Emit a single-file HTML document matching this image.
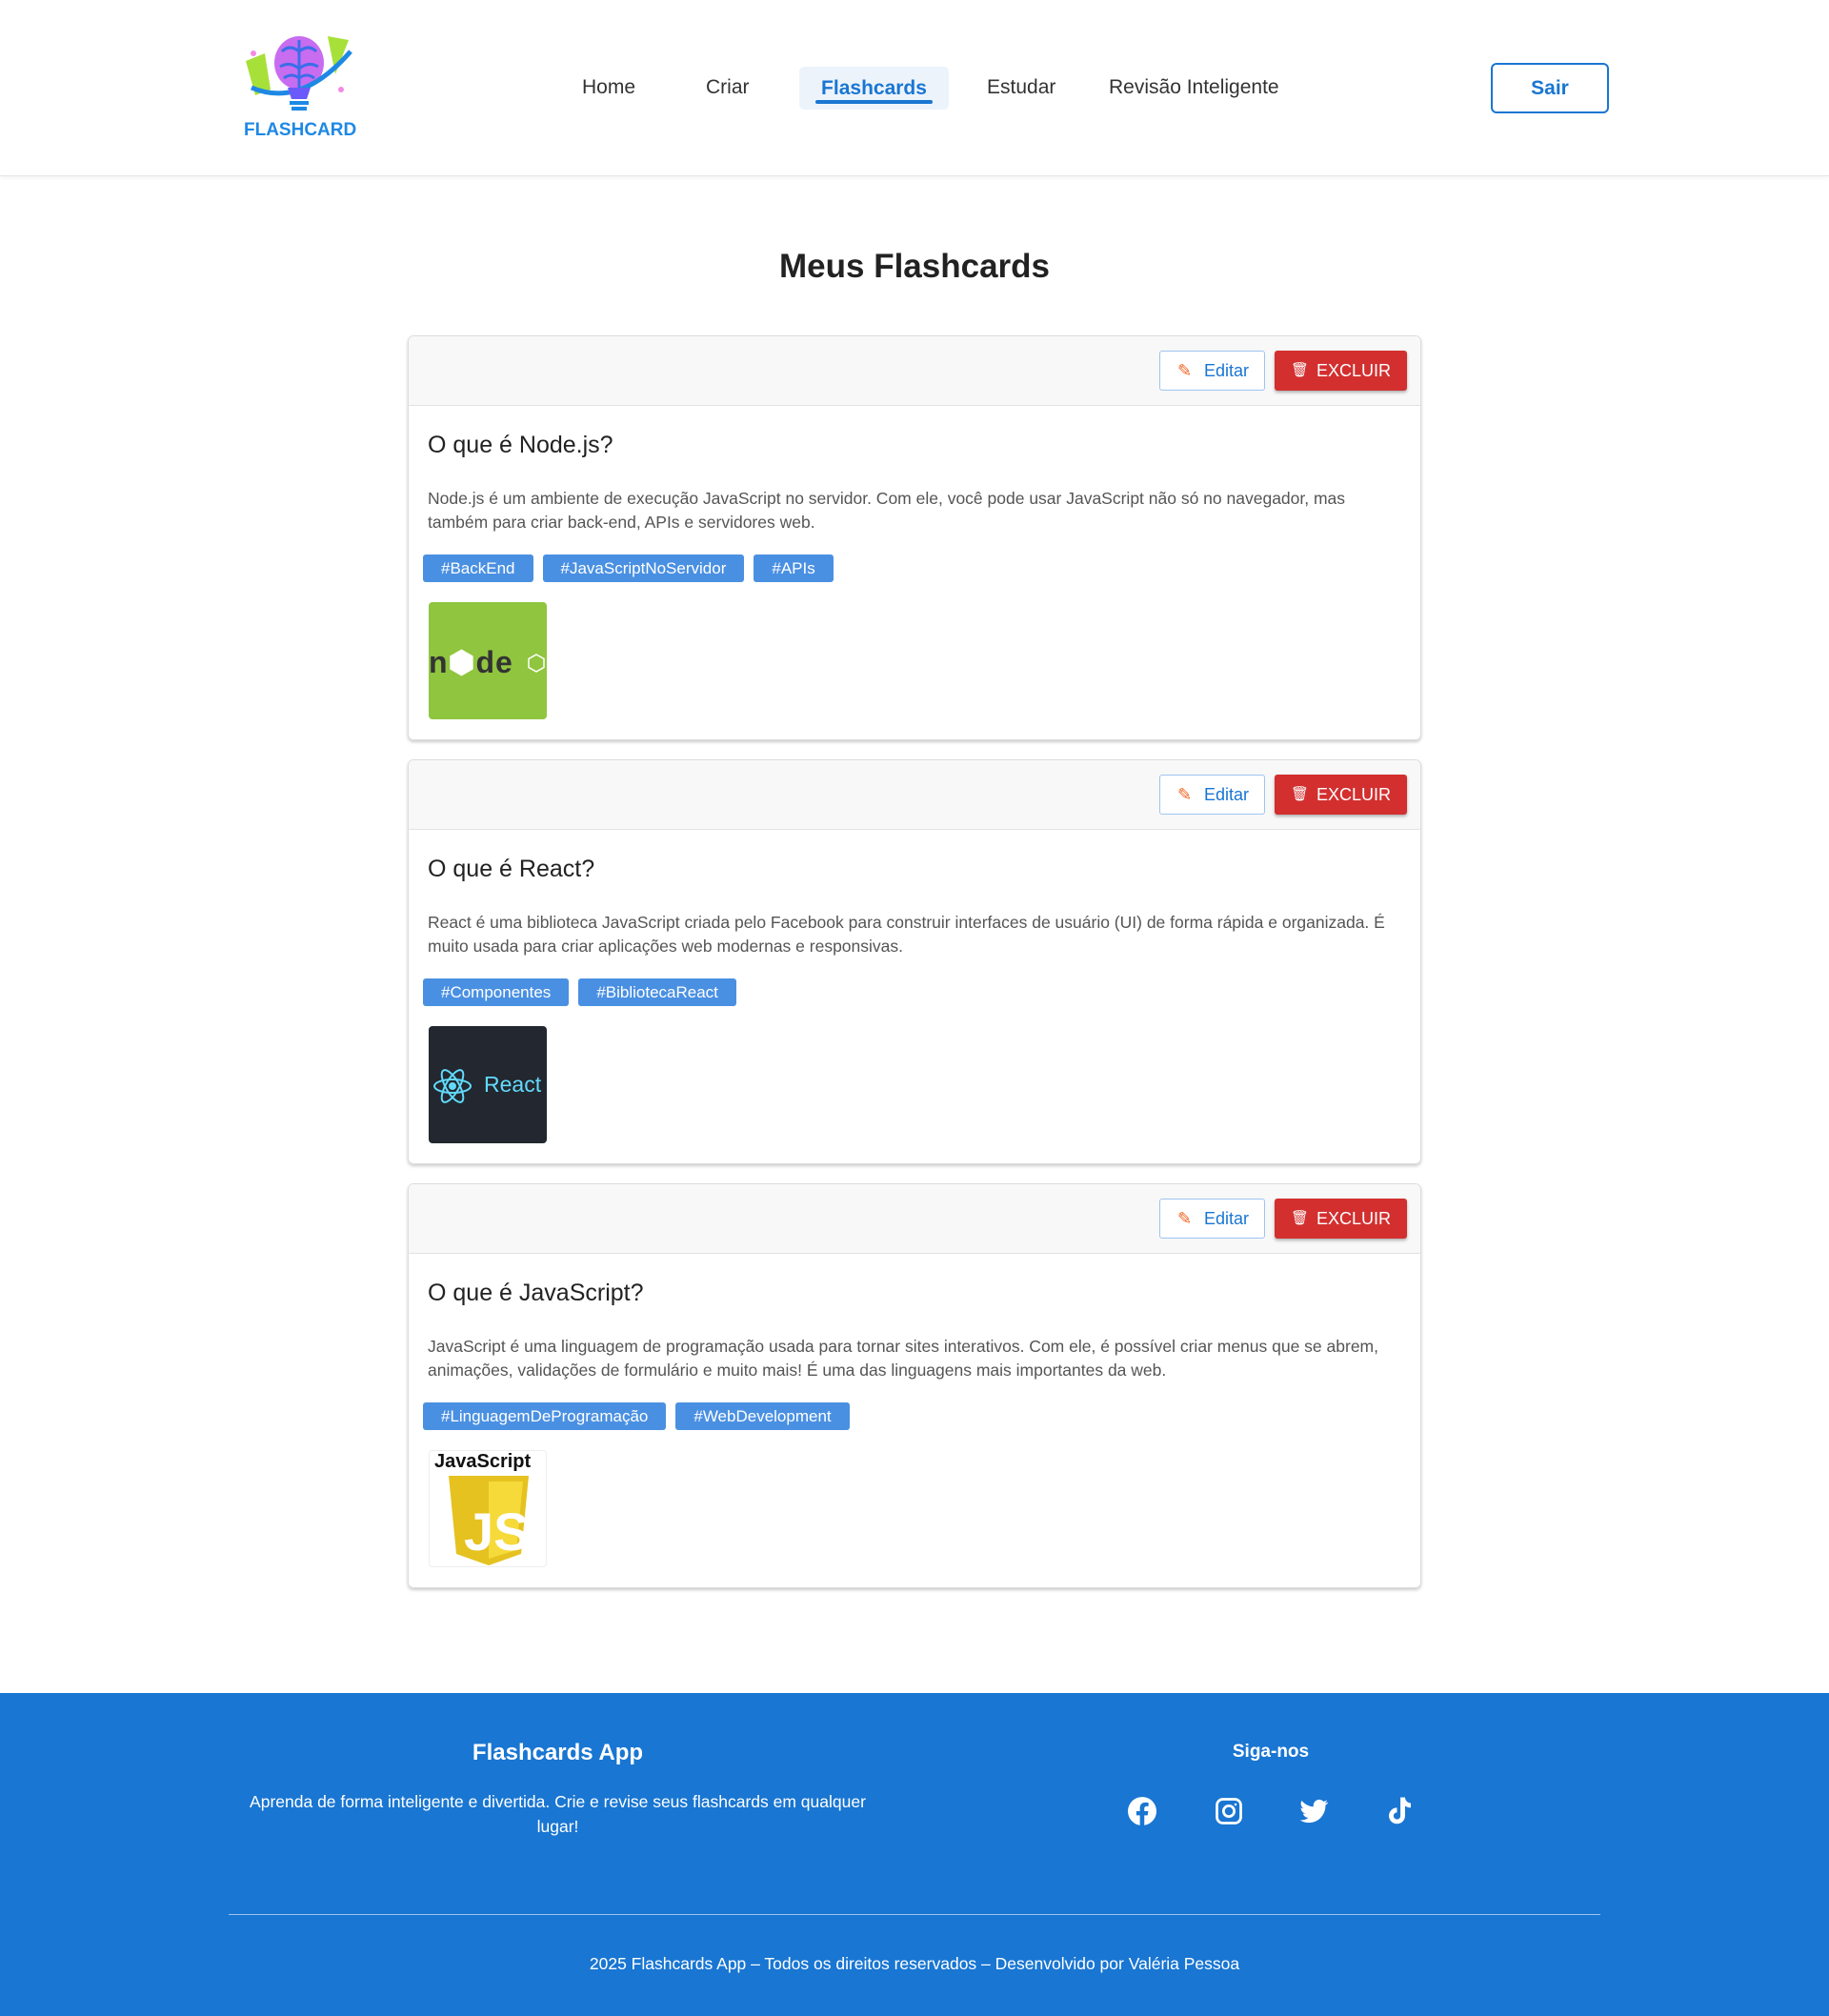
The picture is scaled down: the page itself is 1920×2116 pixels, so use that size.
<!DOCTYPE html>
<html><head><meta charset="utf-8"><style>
*{box-sizing:border-box;margin:0;padding:0}
body{width:1920px;height:2116px;font-family:"Liberation Sans",Arial,sans-serif;background:#fff;position:relative;overflow:hidden}
.hdr{position:absolute;left:0;top:0;width:1920px;height:185px;border-bottom:1px solid #e6e6e6;box-shadow:0 2px 4px rgba(0,0,0,.05)}
.nav{position:absolute;top:80px;font-size:21px;color:#333}
.act{position:absolute;left:839px;top:70px;width:157px;height:45px;background:#edf3fb;border-radius:5px;color:#1976d2;font-weight:bold;font-size:21px;text-align:center;padding-top:11px}
.act:after{content:"";position:absolute;left:17px;right:17px;bottom:6px;height:4px;background:#1976d2;border-radius:2px}
.sair{position:absolute;left:1565px;top:66px;width:124px;height:53px;border:2px solid #1976d2;border-radius:6px;color:#1976d2;font-weight:bold;font-size:21px;text-align:center;line-height:49px}
h1{position:absolute;top:260px;width:1920px;text-align:center;font-size:35px;color:#222}
.card{position:absolute;left:428px;width:1064px;height:425px;border:1px solid #ddd;border-radius:6px;box-shadow:0 2px 3px rgba(0,0,0,.2);overflow:hidden}
.ch{height:73px;background:#f8f8f8;border-bottom:1px solid #e3e3e3;position:relative}
.ed{position:absolute;left:788px;top:15px;width:111px;height:42px;border:1px solid #9fc4ef;border-radius:3px;background:#fff;color:#1976d2;font-size:18px;line-height:40px;padding-left:46px}
.ex{position:absolute;left:909px;top:15px;width:139px;height:42px;background:#d32f2f;border-radius:3px;color:#fff;font-size:18px;line-height:42px;padding-left:44px;box-shadow:0 2px 3px rgba(0,0,0,.3)}
.ct{position:absolute;left:20px;top:100px;font-size:25px;color:#222}
.cd{position:absolute;left:20px;top:158px;width:1030px;font-size:17.5px;line-height:24.5px;color:#555}
.tags{position:absolute;left:15px;top:229px}
.tag{display:inline-block;background:#4a90e2;color:#fff;font-size:17px;height:29px;line-height:29px;padding:0 19px;border-radius:3px;margin-right:10px}
.img{position:absolute;left:21px;top:279px;width:124px;height:123px;border-radius:4px;overflow:hidden}
.foot{position:absolute;left:0;top:1777px;width:1920px;height:339px;background:#1976d2;color:#fff}
</style></head><body>
<div class="hdr">
<svg style="position:absolute;left:256px;top:34px" width="122" height="90" viewBox="0 0 122 90">
<path d="M2 30 L22 22 L28 60 L12 66Z" fill="#a8e03a"/><path d="M88 4 L110 8 L96 44Z" fill="#a8e03a"/>
<circle cx="10" cy="22" r="3" fill="#f38be6"/><circle cx="102" cy="60" r="3" fill="#f38be6"/>
<ellipse cx="58" cy="32" rx="26" ry="28" fill="#c86cf0"/>
<path d="M40 20q8-8 18 0q10-8 18 0M38 36q10-6 20 2q10-8 20-2M42 48q8-6 16 0q8-6 16 0M58 8v50" stroke="#3b6ee8" stroke-width="3" fill="none"/>
<path d="M8 58 Q60 80 112 20" stroke="#1e88e5" stroke-width="5" fill="none"/>
<path d="M46 58h24l-4 12h-16z" fill="#6a5af9"/><rect x="48" y="72" width="20" height="4" fill="#1e88e5"/><rect x="50" y="78" width="16" height="4" fill="#1e88e5"/>
</svg>
<div style="position:absolute;left:256px;top:126px;font-size:19px;font-weight:bold;color:#1e88e5">FLASHCARD</div>
<div class="nav" style="left:611px">Home</div>
<div class="nav" style="left:741px">Criar</div>
<div class="act">Flashcards</div>
<div class="nav" style="left:1036px">Estudar</div>
<div class="nav" style="left:1164px">Revisão Inteligente</div>
<div class="sair">Sair</div>
</div>
<h1>Meus Flashcards</h1>

<div class="card" style="top:352px">
<div class="ch"><div class="ed"><span style="position:absolute;left:18px;color:#f26522">✎</span>Editar</div><div class="ex"><span style="position:absolute;left:17px;font-size:15px">🗑</span>EXCLUIR</div></div>
<div class="ct">O que é Node.js?</div>
<div class="cd">Node.js é um ambiente de execução JavaScript no servidor. Com ele, você pode usar JavaScript não só no navegador, mas também para criar back-end, APIs e servidores web.</div>
<div class="tags"><span class="tag">#BackEnd</span><span class="tag">#JavaScriptNoServidor</span><span class="tag">#APIs</span></div>
<div class="img" style="background:#90c53f"><div style="position:absolute;left:0;top:44px;font-size:32px;font-weight:bold;color:#333;letter-spacing:1px">n<span style="color:#fff">⬢</span>de</div><svg style="position:absolute;left:104px;top:54px" width="18" height="20" viewBox="0 0 18 20"><path d="M9 1l8 4.5v9L9 19l-8-4.5v-9z" fill="none" stroke="#fff" stroke-width="1.5"/></svg></div>
</div>

<div class="card" style="top:797px">
<div class="ch"><div class="ed"><span style="position:absolute;left:18px;color:#f26522">✎</span>Editar</div><div class="ex"><span style="position:absolute;left:17px;font-size:15px">🗑</span>EXCLUIR</div></div>
<div class="ct">O que é React?</div>
<div class="cd">React é uma biblioteca JavaScript criada pelo Facebook para construir interfaces de usuário (UI) de forma rápida e organizada. É muito usada para criar aplicações web modernas e responsivas.</div>
<div class="tags"><span class="tag">#Componentes</span><span class="tag">#BibliotecaReact</span></div>
<div class="img" style="background:#23272f"><svg style="position:absolute;left:4px;top:42px" width="42" height="42" viewBox="0 0 42 42" fill="none" stroke="#61dafb" stroke-width="2"><ellipse cx="21" cy="21" rx="19" ry="7"/><ellipse cx="21" cy="21" rx="19" ry="7" transform="rotate(60 21 21)"/><ellipse cx="21" cy="21" rx="19" ry="7" transform="rotate(120 21 21)"/><circle cx="21" cy="21" r="3" fill="#61dafb"/></svg><div style="position:absolute;left:58px;top:48px;font-size:23px;color:#61dafb">React</div></div>
</div>

<div class="card" style="top:1242px">
<div class="ch"><div class="ed"><span style="position:absolute;left:18px;color:#f26522">✎</span>Editar</div><div class="ex"><span style="position:absolute;left:17px;font-size:15px">🗑</span>EXCLUIR</div></div>
<div class="ct">O que é JavaScript?</div>
<div class="cd">JavaScript é uma linguagem de programação usada para tornar sites interativos. Com ele, é possível criar menus que se abrem, animações, validações de formulário e muito mais! É uma das linguagens mais importantes da web.</div>
<div class="tags"><span class="tag">#LinguagemDeProgramação</span><span class="tag">#WebDevelopment</span></div>
<div class="img" style="background:#fff;border:1px solid #eee"><div style="position:absolute;left:5px;top:0px;font-size:20px;font-weight:bold;color:#111">JavaScript</div><svg style="position:absolute;left:20px;top:26px" width="84" height="94" viewBox="0 0 84 94"><path d="M0 0h84l-8 82-34 12-34-12z" fill="#e5c21f"/><path d="M42 6h36l-7 72-29 9z" fill="#f5da3a"/><text x="16" y="78" font-family="Liberation Sans" font-weight="bold" font-size="56" fill="#fff">JS</text></svg></div>
</div>

<div class="foot">
<div style="position:absolute;left:254px;width:663px;top:49px;text-align:center;font-size:24px;font-weight:bold">Flashcards App</div>
<div style="position:absolute;left:250px;width:671px;top:101px;text-align:center;font-size:17.5px;line-height:26px">Aprenda de forma inteligente e divertida. Crie e revise seus flashcards em qualquer lugar!</div>
<div style="position:absolute;left:1234px;width:200px;top:51px;text-align:center;font-size:19px;font-weight:bold">Siga-nos</div>
<svg style="position:absolute;left:1184px;top:109px" width="30" height="30" viewBox="0 0 24 24" fill="#fff"><path d="M24 12a12 12 0 1 0-13.9 11.9v-8.4H7.1V12h3V9.4c0-3 1.8-4.7 4.5-4.7 1.3 0 2.7.2 2.7.2v3h-1.5c-1.5 0-2 .9-2 1.9V12h3.3l-.5 3.5h-2.8v8.4A12 12 0 0 0 24 12z"/></svg>
<svg style="position:absolute;left:1275px;top:109px" width="30" height="30" viewBox="0 0 24 24" fill="none" stroke="#fff" stroke-width="2.2"><rect x="2" y="2" width="20" height="20" rx="5"/><circle cx="12" cy="12" r="4.5"/><circle cx="17.6" cy="6.4" r="1" fill="#fff" stroke="none"/></svg>
<svg style="position:absolute;left:1364px;top:109px" width="31" height="30" viewBox="0 0 24 24" fill="#fff"><path d="M23.6 4.6c-.9.4-1.8.6-2.8.8 1-.6 1.8-1.6 2.2-2.7-1 .6-2 1-3.1 1.2A4.9 4.9 0 0 0 11.5 8.3 14 14 0 0 1 1.6 3.2a4.9 4.9 0 0 0 1.5 6.6c-.8 0-1.6-.3-2.2-.6 0 2.4 1.7 4.4 3.9 4.8-.7.2-1.500.2-2.2.1.6 2 2.4 3.4 4.6 3.4A9.9 9.9 0 0 1 0 19.5 14 14 0 0 0 7.5 21.7c9 0 14-7.5 14-14v-.6c1-.7 1.8-1.6 2.4-2.5z"/></svg>
<svg style="position:absolute;left:1455px;top:108px" width="29" height="32" viewBox="0 0 24 24" fill="#fff"><path d="M12.5 0h4c.2 2.6 1.9 4.8 5 5v4c-1.9 0-3.6-.6-5-1.6V16a7 7 0 1 1-7-7v4.1a3 3 0 1 0 3 2.9z"/></svg>
<div style="position:absolute;left:240px;width:1440px;top:232px;height:1px;background:#9cc4ef"></div>
<div style="position:absolute;left:0;width:1920px;top:274px;text-align:center;font-size:17.5px">2025 Flashcards App – Todos os direitos reservados – Desenvolvido por Valéria Pessoa</div>
</div>
</body></html>
